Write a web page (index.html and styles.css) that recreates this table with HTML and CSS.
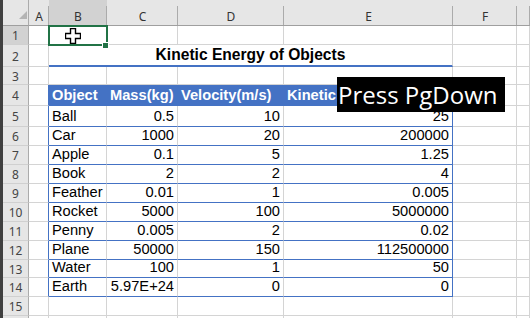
FILE: index.html
```html
<!DOCTYPE html>
<html>
<head>
<meta charset="utf-8">
<link rel="stylesheet" href="styles.css">
</head>
<body>
<div class="app">
  <div class="edge"></div>
  <div class="sheet">
    <div class="corner"><svg class="tri" width="8" height="8" viewBox="0 0 8 8"><polygon points="8,0 8,8 0,8" fill="#b4b4b4"/></svg></div>
    <div class="ch">A</div><div class="ch sel">B</div><div class="ch">C</div><div class="ch">D</div><div class="ch">E</div><div class="ch">F</div><div class="ch"></div>

    <div class="rh sel">1</div><div class="c"></div>
    <div class="c b1"><div class="selbox"></div><div class="handle"></div><svg class="cursor" width="16" height="16" viewBox="0 0 16 16"><path d="M5.5 0.5H10.5V5.5H15.5V10.5H10.5V15.5H5.5V10.5H0.5V5.5H5.5Z" fill="#fff" stroke="#000" stroke-width="1.4"/></svg></div>
    <div class="c"></div><div class="c"></div><div class="c"></div><div class="c"></div><div class="c"></div>

    <div class="rh">2</div><div class="c"></div><div class="c title">Kinetic Energy of Objects</div><div class="c"></div><div class="c"></div>

    <div class="rh">3</div><div class="c"></div><div class="c"></div><div class="c"></div><div class="c"></div><div class="c"></div><div class="c"></div><div class="c"></div>

    <div class="rh">4</div><div class="c tl"></div><div class="c th">Object</div><div class="c th">Mass(kg)</div><div class="c th">Velocity(m/s)</div><div class="c th last">Kinetic Energy(J)</div><div class="c"></div><div class="c"></div>

    <div class="rh">5</div><div class="c tl"></div><div class="c td">Ball</div><div class="c td num">0.5</div><div class="c td num">10</div><div class="c td num last">25</div><div class="c"></div><div class="c"></div>
    <div class="rh">6</div><div class="c tl"></div><div class="c td">Car</div><div class="c td num">1000</div><div class="c td num">20</div><div class="c td num last">200000</div><div class="c"></div><div class="c"></div>
    <div class="rh">7</div><div class="c tl"></div><div class="c td">Apple</div><div class="c td num">0.1</div><div class="c td num">5</div><div class="c td num last">1.25</div><div class="c"></div><div class="c"></div>
    <div class="rh">8</div><div class="c tl"></div><div class="c td">Book</div><div class="c td num">2</div><div class="c td num">2</div><div class="c td num last">4</div><div class="c"></div><div class="c"></div>
    <div class="rh">9</div><div class="c tl"></div><div class="c td">Feather</div><div class="c td num">0.01</div><div class="c td num">1</div><div class="c td num last">0.005</div><div class="c"></div><div class="c"></div>
    <div class="rh">10</div><div class="c tl"></div><div class="c td">Rocket</div><div class="c td num">5000</div><div class="c td num">100</div><div class="c td num last">5000000</div><div class="c"></div><div class="c"></div>
    <div class="rh">11</div><div class="c tl"></div><div class="c td">Penny</div><div class="c td num">0.005</div><div class="c td num">2</div><div class="c td num last">0.02</div><div class="c"></div><div class="c"></div>
    <div class="rh">12</div><div class="c tl"></div><div class="c td">Plane</div><div class="c td num">50000</div><div class="c td num">150</div><div class="c td num last">112500000</div><div class="c"></div><div class="c"></div>
    <div class="rh">13</div><div class="c tl"></div><div class="c td">Water</div><div class="c td num">100</div><div class="c td num">1</div><div class="c td num last">50</div><div class="c"></div><div class="c"></div>
    <div class="rh">14</div><div class="c tl"></div><div class="c td">Earth</div><div class="c td num">5.97E+24</div><div class="c td num">0</div><div class="c td num last">0</div><div class="c"></div><div class="c"></div>

    <div class="rh">15</div><div class="c"></div><div class="c"></div><div class="c"></div><div class="c"></div><div class="c"></div><div class="c"></div><div class="c"></div>

    <div class="rh end"></div><div class="c end"></div><div class="c end"></div><div class="c end"></div><div class="c end"></div><div class="c end"></div><div class="c end"></div><div class="c end"></div>
  </div>
  <div class="keytip">Press PgDown</div>
</div>
</body>
</html>
```
FILE: styles.css
```css
* { box-sizing: border-box; }
html, body { margin: 0; padding: 0; }
body {
  width: 530px;
  height: 318px;
  overflow: hidden;
  background: #fff;
  font-family: "Liberation Sans", Arial, sans-serif;
}
.app {
  display: flex;
  height: 318px;
  position: relative;
}
.edge {
  width: 3px;
  flex: none;
  background: #404040;
}
.sheet {
  flex: 1;
  display: grid;
  grid-template-columns: 26px 20px 58px 71px 106px 169px 64px 1fr;
  grid-template-rows: 26px 19px 22px 18px 21px 21px 19px 19px 19px 19px 19px 19px 19px 18px 19px 19px 1fr;
}
.corner {
  position: relative;
  background: #e6e6e6;
  border-right: 1px solid #ababab;
  border-bottom: 1px solid #9f9f9f;
}
.tri {
  position: absolute;
  left: 16px;
  top: 11px;
}
.ch {
  background-color: #e6e6e6;
  background-image: linear-gradient(#ababab, #ababab);
  background-size: 1px 19px;
  background-position: right bottom;
  background-repeat: no-repeat;
  border-bottom: 1px solid #9f9f9f;
  display: flex;
  align-items: center;
  justify-content: center;
  padding-top: 7px;
  font-family: "Noto Sans", "Open Sans", sans-serif;
  font-size: 12px;
  color: #333;
}
.ch.sel, .rh.sel { background-color: #d2d2d2; }
.rh {
  background: #e6e6e6;
  border-right: 1px solid #ababab;
  border-bottom: 1px solid #d0d0d0;
  display: flex;
  align-items: center;
  justify-content: center;
  padding-top: 1px;
  font-family: "Noto Sans", "Open Sans", sans-serif;
  font-size: 12px;
  color: #444;
}
.c {
  border-right: 1px solid #d4d4d4;
  border-bottom: 1px solid #d4d4d4;
  display: flex;
  align-items: flex-end;
  padding: 0 3px 1px 3px;
  font-size: 14.67px;
  line-height: 17px;
  color: #000;
  white-space: nowrap;
  min-width: 0;
}
.end { border-bottom: none; }
.b1 { position: relative; }
.selbox {
  position: absolute;
  left: -1px;
  top: -1px;
  width: 60px;
  height: 21px;
  border: 2px solid #217346;
}
.handle {
  position: absolute;
  left: 53px;
  top: 16px;
  width: 7px;
  height: 7px;
  background: #217346;
  border: 1px solid #fff;
}
.cursor {
  position: absolute;
  left: 16px;
  top: 2px;
}
.title {
  grid-column: span 4;
  justify-content: center;
  font-weight: bold;
  font-size: 15.6px;
  line-height: 18px;
  border-bottom: 2px solid #4472c4;
  padding-bottom: 1px;
}
.tl { border-right-color: #4472c4; }
.th {
  background: #4472c4;
  color: #fff;
  font-weight: bold;
  border-right-color: #4472c4;
  border-bottom-color: #4472c4;
}
.td { border-bottom-color: #4472c4; }
.num { justify-content: flex-end; }
.last { border-right-color: #4472c4; }
.keytip {
  position: absolute;
  left: 337px;
  top: 77px;
  width: 168px;
  height: 35px;
  background: #000;
  color: #fff;
  font-family: "Open Sans", "Noto Sans", sans-serif;
  font-size: 24px;
  line-height: 35px;
  padding-left: 1px;
  white-space: nowrap;
  overflow: hidden;
}
```
